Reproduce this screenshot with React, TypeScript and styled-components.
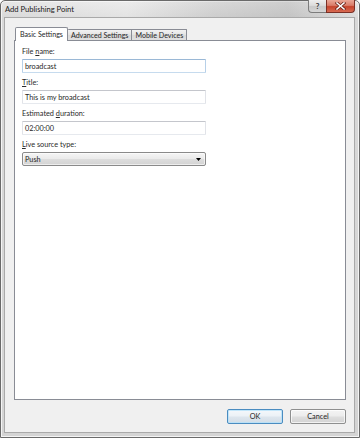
import React from "react";
import styled, { createGlobalStyle, css } from "styled-components";

const Global = createGlobalStyle`
  html, body { margin: 0; padding: 0; background: #ffffff; }
  * { box-sizing: border-box; }
`;

const FONT = `"Segoe UI", Lato, "Noto Sans", sans-serif`;

const Window = styled.div`
  width: 360px;
  height: 438px;
  display: flex;
  flex-direction: column;
  border: 1px solid #6a6a6a;
  border-radius: 5px 5px 0 0;
  background: linear-gradient(to bottom, #e6e6e6 0px, #d9d9d9 17px, #d4d4d4 100%);
  box-shadow: inset 0 0 0 1px #f4f4f4;
  font-family: ${FONT};
  color: #262626;
`;

const TitleBar = styled.div`
  height: 16px;
  flex: none;
  display: flex;
  align-items: flex-start;
  justify-content: space-between;
  padding: 0 4px 0 4px;
  background: linear-gradient(to right, rgba(255,255,255,0) 0%, rgba(255,255,255,0.25) 35%, rgba(0,0,0,0.06) 60%, rgba(0,0,0,0.1) 80%, rgba(255,255,255,0.1) 100%);
`;

const Title = styled.div`
  font-size: 7.6px;
  line-height: 16px;
  color: #1a1a1a;
  white-space: nowrap;
`;

const Controls = styled.div`
  display: flex;
  margin-top: -1px;
`;

const CaptionButton = styled.div<{ $close?: boolean }>`
  height: 13px;
  display: flex;
  align-items: center;
  justify-content: center;
  border: 1px solid #7c7c7c;
  border-top: none;
  ${(p) =>
    p.$close
      ? css`
          width: 29px;
          border-color: #7a3026;
          border-radius: 0 0 4px 0;
          background: linear-gradient(to bottom, #eaa797 0%, #d97c69 45%, #c6442c 55%, #d86a52 100%);
        `
      : css`
          width: 18px;
          border-right: none;
          border-radius: 0 0 0 4px;
          background: linear-gradient(to bottom, #eeeeee 0%, #dcdcdc 45%, #c9c9c9 55%, #d6d6d6 100%);
          color: #3a3a3a;
          font-size: 8px;
          font-weight: bold;
          line-height: 1;
        `}
`;

const Client = styled.div`
  flex: 1;
  display: flex;
  flex-direction: column;
  margin: 0 4px 4px 3px;
  border: 1px solid #a9a9a9;
  background: #f0f0f0;
  padding: 9px 8px 8px 9px;
`;

const TabStrip = styled.div`
  display: flex;
  align-items: flex-end;
  height: 13px;
  padding-left: 1px;
  position: relative;
  z-index: 1;
`;

const Tab = styled.div<{ $active?: boolean }>`
  font-size: 7.1px;
  white-space: nowrap;
  border: 1px solid #898c95;
  border-bottom: none;
  display: flex;
  align-items: center;
  ${(p) =>
    p.$active
      ? css`
          height: 14px;
          margin-bottom: -1px;
          padding: 0 4px 1px 4px;
          background: #ffffff;
          border-radius: 2px 2px 0 0;
        `
      : css`
          height: 11px;
          padding: 0 3px 0 3px;
          margin-left: -1px;
          background: linear-gradient(to bottom, #f2f2f2, #e3e3e3 50%, #d9d9d9 51%, #e0e0e0);
          border-radius: 1px 1px 0 0;
          &:nth-child(2) { margin-left: 0; border-left: none; }
        `}
`;

const Panel = styled.div`
  flex: 1;
  background: #ffffff;
  border: 1px solid #898c95;
  padding: 6px 8px 0 7px;
  display: flex;
  flex-direction: column;
  gap: 5px;
`;

const Field = styled.div`
  display: flex;
  flex-direction: column;
  gap: 2px;
`;

const Label = styled.div`
  font-size: 7.3px;
  line-height: 10px;
  color: #2a2a2a;
  u { text-decoration: underline; text-underline-offset: 1px; }
`;

const TextBox = styled.div<{ $focused?: boolean }>`
  width: 184px;
  height: 14px;
  display: flex;
  align-items: center;
  padding-left: 2px;
  font-size: 7.3px;
  background: #ffffff;
  border: 1px solid;
  border-radius: 1px;
  ${(p) =>
    p.$focused
      ? css`
          border-color: #9ab8d6 #b7d0e8 #c6dbee #b7d0e8;
        `
      : css`
          border-color: #c4c6cc #e1e3e8 #e6e9ee #e1e3e8;
        `}
`;

const Combo = styled.div`
  width: 184px;
  height: 14px;
  display: flex;
  align-items: center;
  justify-content: space-between;
  padding: 0 4px 0 2px;
  font-size: 7.3px;
  border: 1px solid #8a8a8a;
  border-radius: 2px;
  background: linear-gradient(to bottom, #f5f5f5 0%, #ebebeb 48%, #dddddd 52%, #d3d3d3 100%);
  box-shadow: inset 0 0 0 1px rgba(255,255,255,0.6);
`;

const ButtonRow = styled.div`
  display: flex;
  justify-content: flex-end;
  gap: 7px;
  margin-top: 9px;
`;

const Button = styled.div<{ $default?: boolean }>`
  width: 56px;
  height: 15px;
  display: flex;
  align-items: center;
  justify-content: center;
  font-size: 7.3px;
  border-radius: 2px;
  border: 1px solid ${(p) => (p.$default ? "#4a8cc0" : "#8e8f8f")};
  background: ${(p) =>
    p.$default
      ? "linear-gradient(to bottom, #f4f8fb 0%, #ebf1f6 48%, #dde6ee 52%, #d3dde6 100%)"
      : "linear-gradient(to bottom, #f4f4f4 0%, #ececec 48%, #dedede 52%, #d3d3d3 100%)"};
  box-shadow: inset 0 0 0 1px ${(p) => (p.$default ? "rgba(180,225,250,0.8)" : "rgba(255,255,255,0.7)")};
`;

const CloseGlyph = () => (
  <svg width="11" height="8" viewBox="0 0 11 8">
    <path d="M2 1 L9 7 M9 1 L2 7" stroke="#6a2218" strokeWidth="3" strokeLinecap="square" />
    <path d="M2 1 L9 7 M9 1 L2 7" stroke="#ffffff" strokeWidth="1.6" strokeLinecap="square" />
  </svg>
);

const Arrow = () => (
  <svg width="5" height="3" viewBox="0 0 5 3">
    <path d="M0 0 H5 L2.5 3 Z" fill="#000" />
  </svg>
);

export default function App() {
  return (
    <>
      <Global />
      <Window>
        <TitleBar>
          <Title>Add Publishing Point</Title>
          <Controls>
            <CaptionButton>?</CaptionButton>
            <CaptionButton $close>
              <CloseGlyph />
            </CaptionButton>
          </Controls>
        </TitleBar>
        <Client>
          <TabStrip>
            <Tab $active>Basic Settings</Tab>
            <Tab>Advanced Settings</Tab>
            <Tab>Mobile Devices</Tab>
          </TabStrip>
          <Panel>
            <Field>
              <Label>
                File <u>n</u>ame:
              </Label>
              <TextBox $focused>broadcast</TextBox>
            </Field>
            <Field>
              <Label>
                <u>T</u>itle:
              </Label>
              <TextBox>This is my broadcast</TextBox>
            </Field>
            <Field>
              <Label>
                Estimated <u>d</u>uration:
              </Label>
              <TextBox>02:00:00</TextBox>
            </Field>
            <Field>
              <Label>
                <u>L</u>ive source type:
              </Label>
              <Combo>
                Push
                <Arrow />
              </Combo>
            </Field>
          </Panel>
          <ButtonRow>
            <Button $default>OK</Button>
            <Button>Cancel</Button>
          </ButtonRow>
        </Client>
      </Window>
    </>
  );
}
